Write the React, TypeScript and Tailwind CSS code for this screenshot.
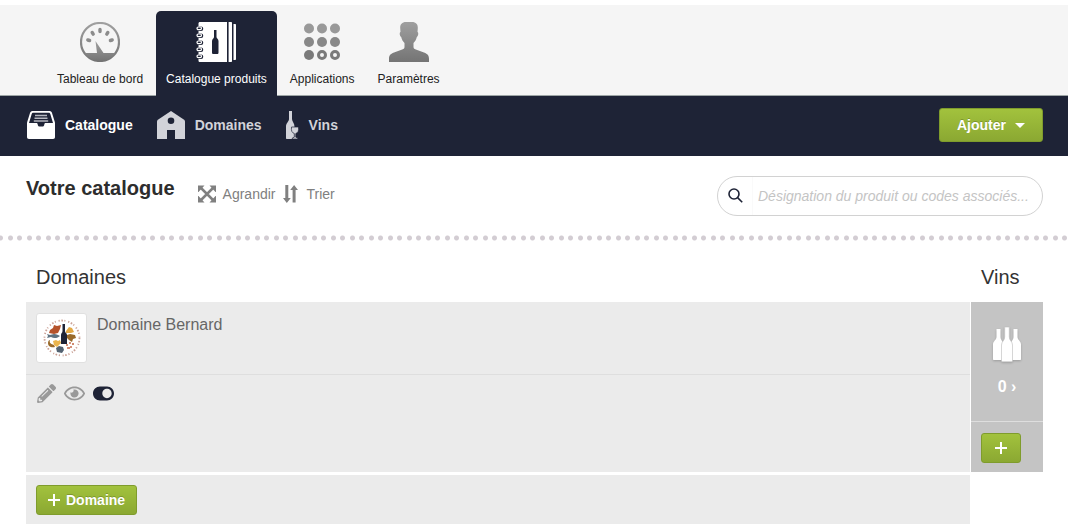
import { useState } from "react";
import type { ReactNode } from "react";
import { FaPencilAlt, FaRegEye, FaToggleOff, FaToggleOn } from "react-icons/fa";

interface Tab {
  label: string;
  icon: ReactNode;
  active?: boolean;
}

function GaugeIcon() {
  return (
    <svg width="40" height="40" viewBox="0 0 40 40">
      <defs>
        <linearGradient id="gauge-fill" x1="0" y1="0" x2="0" y2="1">
          <stop offset="0" stopColor="#a0a0a0" />
          <stop offset="1" stopColor="#747474" />
        </linearGradient>
      </defs>
      <circle
        cx="20"
        cy="20"
        r="19"
        fill="none"
        stroke="url(#gauge-fill)"
        strokeWidth="2.2"
      />
      <path
        d="M4.500 31H17L15.500 19L23.500 31H35.500A19 19 0 0 1 4.500 31Z"
        fill="url(#gauge-fill)"
      />
      <g stroke="#8c8c8c" strokeWidth="3.4" strokeLinecap="round">
        <path d="M20 7.500v2M12.200 10.500l1 1.600M27.800 10.500l-1 1.600M7.800 18l1.800.5M32.200 18l-1.800.5" />
      </g>
    </svg>
  );
}

const ringRows = [6, 13, 20, 27, 34];

function NotebookIcon() {
  return (
    <svg width="40" height="40" viewBox="0 0 40 40">
      <path d="M4 0h27v40H4c-1 0-1.500-.5-1.500-1.500v-37C2.500.5 3 0 4 0z" fill="#fff" />
      <path d="M32.600 0h2.400c.6 0 1 .4 1 1v38c0 .6-.4 1-1 1h-2.400zM37.500 2h1.500c.6 0 1 .4 1 1v34c0 .6-.4 1-1 1h-1.500z" fill="#fff" />
      <g fill="#1e2336">
        {ringRows.map((y) => (
          <path key={y} d={`M0 ${y - 1.5}h5a2 2 0 0 1 0 4.500H0z`} />
        ))}
        <path d="M18 8h2.500v7c0 1.500 2 2 2 4v11.500c0 1-.5 1.500-1.500 1.500h-3.500c-1 0-1.500-.5-1.500-1.500V19c0-2 2-2.500 2-4z" />
      </g>
      <g fill="none" stroke="#fff" strokeWidth="1.200">
        {ringRows.map((y) => (
          <rect key={y} x="1" y={y - 1} width="4.500" height="2.600" rx="1.300" />
        ))}
      </g>
    </svg>
  );
}

function DotsIcon() {
  return (
    <svg width="40" height="40" viewBox="0 0 40 40">
      <g fill="#999">
        <circle cx="7" cy="6.500" r="5" />
        <circle cx="20" cy="6.500" r="5" />
        <circle cx="33" cy="6.500" r="5" />
      </g>
      <g fill="#888">
        <circle cx="7" cy="20" r="5" />
        <circle cx="20" cy="20" r="5" />
        <circle cx="33" cy="20" r="5" />
      </g>
      <circle cx="7" cy="33" r="5" fill="#7a7a7a" />
      <g fill="none" stroke="#7a7a7a" strokeWidth="3">
        <circle cx="20" cy="33" r="3.500" />
        <circle cx="33" cy="33" r="3.500" />
      </g>
    </svg>
  );
}

function UserIcon() {
  return (
    <svg width="40" height="40" viewBox="0 0 40 40">
      <defs>
        <linearGradient id="user-fill" x1="0" y1="0" x2="0" y2="1">
          <stop offset="0" stopColor="#9f9f9f" />
          <stop offset="1" stopColor="#747474" />
        </linearGradient>
      </defs>
      <path
        d="M17 0h6c4 0 6 2.500 5.800 6l-.3 4c1.200.3 1 4-.7 5-.5 2.500-1.800 4.500-3.300 6v4c0 1.500 1 2 3 2.700l7.500 2.800c3.800 1.500 5 3 5 6.500v3H0v-3c0-3.500 1.200-5 5-6.500l7.500-2.800c2-.7 3-1.200 3-2.700v-4c-1.500-1.500-2.800-3.500-3.300-6-1.700-1-1.900-4.700-.7-5l-.3-4C11 2.500 13 0 17 0z"
        fill="url(#user-fill)"
      />
    </svg>
  );
}

function InboxIcon() {
  return (
    <svg width="28" height="28" viewBox="0 0 28 28">
      <path
        d="M6 0h16c1.500 0 2.500.6 3 2l3 9.500V26c0 1.300-.7 2-2 2H2c-1.300 0-2-.7-2-2V11.500L3 2c.5-1.400 1.500-2 3-2z"
        fill="#fff"
      />
      <path
        d="M6.500 1.800h15c1 0 1.500.4 1.800 1.200l2.700 9h-7.500c-.8 0-1 .5-1.200 1.500-.3 1.500-.8 2-1.800 2h-3c-1 0-1.500-.5-1.800-2-.2-1-.4-1.500-1.200-1.500H2L4.700 3c.3-.8.8-1.200 1.800-1.200z"
        fill="#1e2336"
      />
      <path d="M8 4.500h12M7.500 7.200h13M6.800 10h14.400" stroke="#b5b7bf" strokeWidth="1.500" />
    </svg>
  );
}

function BarnIcon() {
  return (
    <svg width="28" height="28" viewBox="0 0 28 28">
      <path
        fillRule="evenodd"
        d="M14 0l13.500 9 .5 1.500V28H18V19h-8v9H0V10.500L.5 9zM14 6.500a3.300 3.300 0 1 0 0 6.600 3.300 3.300 0 0 0 0-6.600z"
        fill="#d2d3d9"
      />
    </svg>
  );
}

function BottleGlassIcon() {
  return (
    <svg width="13" height="28" viewBox="0 0 13 28">
      <path
        d="M3 0h3v8c0 2.500 2.500 4 2.500 7.500V28H1c-.7 0-1-.3-1-1V15.500C0 12 3 10.500 3 8z"
        fill="#d2d3d9"
      />
      <path
        d="M5.500 16h7c.5 3.800-.5 5.800-2.700 6.500v3.700l2 .8v1H6.300v-1l2-.8v-3.700C6 21.800 5 19.800 5.500 16z"
        fill="#d2d3d9"
        stroke="#1e2336"
        strokeWidth=".7"
      />
    </svg>
  );
}

function ExpandIcon() {
  return (
    <svg width="18" height="18" viewBox="0 0 18 18">
      <path d="M3 3l12 12M15 3L3 15" stroke="#808080" strokeWidth="2.500" />
      <path
        d="M0 .5h6.500l-6 6.500H0zM18 .5h-6.500L17.500 7h.5zM0 17.500h6.500L.5 11H0zM18 17.500h-6.500l6-6.500h.5z"
        fill="#808080"
      />
    </svg>
  );
}

function SortIcon() {
  return (
    <svg width="15" height="18" viewBox="0 0 15 18">
      <path
        d="M2.300 0h3v13h2.500L3.800 18 0 13h2.300zM9.600 17.500h3V5H15l-3.900-5L7.200 5h2.400z"
        fill="#808080"
      />
    </svg>
  );
}

function SearchIcon() {
  return (
    <svg width="15" height="15" viewBox="0 0 15 15" fill="none" stroke="#1e2336" strokeWidth="1.600">
      <circle cx="6" cy="6" r="5" />
      <path d="M9.600 9.600l4.600 4.600" />
    </svg>
  );
}

function BottlesIcon() {
  return (
    <svg
      width="28"
      height="35"
      viewBox="0 0 28 35"
      className="drop-shadow-[0_1px_1px_rgba(0,0,0,0.2)]"
    >
      <g fill="#fff">
        <path d="M3.500 2h4v8c0 3 2.500 4 2.500 7.500V33H1c-.7 0-1-.3-1-1V17.500C0 14 3.500 13 3.500 10z" />
        <path d="M20.500 2h4v8c0 3 3.500 4 3.500 7.500V32c0 .7-.3 1-1 1h-9V17.500c0-3.500 2.500-4.500 2.500-7.500z" />
        <path
          d="M11.700 0h4.600v10c0 3.500 3.200 4.500 3.200 8v15.500c0 .9-.4 1.300-1.300 1.300H9.800c-.9 0-1.300-.4-1.300-1.300V18c0-3.500 3.200-4.500 3.200-8z"
          stroke="#c4c4c4"
          strokeWidth=".7"
        />
      </g>
    </svg>
  );
}

function EstateLogo() {
  return (
    <svg width="48" height="48" viewBox="0 0 48 48" role="img" aria-label="Domaine Bernard">
      <circle
        cx="24"
        cy="24"
        r="17.500"
        fill="none"
        stroke="#cba297"
        strokeWidth="1.800"
        strokeDasharray="1.200 1.700 1.600 1.500 1 2.800"
      />
      <path d="M12 16l3-2 1-3 3 1 4-1-1 4-2 4-4 1-5-1z" fill="#b5532b" />
      <path d="M28 17l3-4 3 1 2 4-3 1h-5z" fill="#e3a844" />
      <path d="M9 20l3 1 4-1c3 0 4 1 6 2-2 2-6 3-9 1l-4 1 1-2z" fill="#5f7280" />
      <path d="M29 21l3-1 5 1 1 3-3 1-1 3-3-2-2-2z" fill="#9a6a2a" />
      <path d="M12 26c-1 3 1 4 4 5l1 2c-3 1-7 0-7-4 0-2 1-3 2-3z" fill="#9a6a2a" />
      <path d="M15 27l3-1 2 1 2-1 1 3-4 4-3-2z" fill="#eab54e" />
      <path d="M18 34l3-2 4 1 1 3-2 3-5-1z" fill="#536271" />
      <path
        d="M28 31h2m1-2h2m-1 4h2m1-4v2m-4 2v2m-2-1h1"
        stroke="#c66e4f"
        strokeWidth="1.600"
      />
      <path d="M24.500 10h2.500v7c0 2 2 2 2 4v9h-6v-9c0-2 1.500-2 1.500-4z" fill="#1e2336" />
    </svg>
  );
}

function PlusIcon() {
  return (
    <svg width="12" height="12" viewBox="0 0 12 12" aria-hidden="true">
      <path d="M6 0v12M0 6h12" stroke="#fff" strokeWidth="2" />
    </svg>
  );
}

const tabs: Tab[] = [
  { label: "Tableau de bord", icon: <GaugeIcon /> },
  { label: "Catalogue produits", icon: <NotebookIcon />, active: true },
  { label: "Applications", icon: <DotsIcon /> },
  { label: "Paramètres", icon: <UserIcon /> },
];

const sections: Tab[] = [
  { label: "Catalogue", icon: <InboxIcon />, active: true },
  { label: "Domaines", icon: <BarnIcon /> },
  { label: "Vins", icon: <BottleGlassIcon /> },
];

const greenButton =
  "flex items-center justify-center rounded-[3px] border border-[#7f9c2c] bg-linear-to-b from-[#a2c23d] to-[#8ba832] font-bold text-white [text-shadow:0_-1px_0_rgba(0,0,0,0.2)]";

function Header() {
  return (
    <header>
      <nav className="flex h-[91px] gap-[3px] border-b border-[#9da5a5] bg-[#f5f5f5] pl-[47px] pt-[6px]">
        {tabs.map((tab) => (
          <a
            key={tab.label}
            href="#"
            className={
              tab.active
                ? "-mb-px flex flex-col items-center rounded-t-[5px] bg-[#1e2336] px-[10px] pt-[11px] text-white"
                : "flex flex-col items-center px-[10px] pt-[11px] text-[#222]"
            }
          >
            {tab.icon}
            <span className="mt-[9px] text-xs">{tab.label}</span>
          </a>
        ))}
      </nav>
      <div className="flex h-[60px] items-center justify-between bg-[#1e2336] pb-[2px] pl-[27px] pr-[25px]">
        <nav className="flex items-center gap-6">
          {sections.map((section) => (
            <a
              key={section.label}
              href="#"
              className={
                section.active
                  ? "flex items-center gap-[10px] text-sm font-bold text-white"
                  : "flex items-center gap-[10px] text-sm font-bold text-[#d2d3d9]"
              }
            >
              {section.icon}
              {section.label}
            </a>
          ))}
        </nav>
        <button type="button" className={`${greenButton} h-[34px] gap-[9px] px-[17px] text-sm`}>
          Ajouter
          <svg width="10" height="5" viewBox="0 0 10 5" aria-hidden="true">
            <path d="M0 0h10L5 5z" fill="#fff" />
          </svg>
        </button>
      </div>
    </header>
  );
}

function Toolbar() {
  return (
    <div className="flex items-start justify-between pb-[19px] pl-[26px] pr-[25px] pt-5">
      <div className="flex items-center">
        <h1 className="mb-3 text-xl leading-6 font-bold text-[#2d2d2d]">Votre catalogue</h1>
        <div className="ml-[23px] flex gap-2 text-sm text-[#808080]">
          <button type="button" className="flex items-center gap-[7px]">
            <ExpandIcon />
            Agrandir
          </button>
          <button type="button" className="flex items-center gap-2">
            <SortIcon />
            Trier
          </button>
        </div>
      </div>
      <label className="flex h-10 w-[326px] items-center rounded-full border border-[#d2d2d2]">
        <span className="flex h-full w-[35px] items-center justify-end border-r border-[#fafafa] pb-[2px] pr-[9px]">
          <SearchIcon />
        </span>
        <input
          type="text"
          aria-label="Rechercher un produit"
          placeholder="Désignation du produit ou codes associés..."
          className="min-w-0 flex-1 bg-transparent pl-[5px] text-sm italic outline-none placeholder:text-[#c4c4c4]"
        />
      </label>
    </div>
  );
}

function Catalogue() {
  const [online, setOnline] = useState(true);

  return (
    <div className="pl-[26px] pr-[25px] pt-[22px]">
      <table className="w-full border-separate border-spacing-0">
        <thead>
          <tr className="text-left text-xl text-[#333]">
            <th className="pb-[11px] pl-[10px] font-normal">Domaines</th>
            <th className="w-[73px] pb-[11px] pl-[11px] font-normal">Vins</th>
          </tr>
        </thead>
        <tbody>
          <tr>
            <td className="bg-[#ebebeb] p-0 align-top">
              <div className="flex h-[73px] gap-[10px] border-b border-[#dedede] pl-[10px] pt-[11px]">
                <div className="flex h-[50px] w-[51px] items-center justify-center rounded-[3px] border border-[#e0e0e0] bg-white">
                  <EstateLogo />
                </div>
                <a href="#" className="self-start text-base leading-6 text-[#666]">
                  Domaine Bernard
                </a>
              </div>
              <div className="flex items-center gap-2 pl-[11px] pt-2 text-[#999]">
                <button type="button" aria-label="Modifier">
                  <FaPencilAlt size={19} />
                </button>
                <button type="button" aria-label="Voir">
                  <FaRegEye size={21} />
                </button>
                <label className="cursor-pointer text-[#1e2336]">
                  <input
                    type="checkbox"
                    aria-label="En ligne"
                    checked={online}
                    onChange={(e) => setOnline(e.target.checked)}
                    className="sr-only"
                  />
                  {online ? <FaToggleOn size={21} /> : <FaToggleOff size={21} />}
                </label>
              </div>
            </td>
            <td className="border-l border-white bg-[#c4c4c4] p-0 align-top">
              <a
                href="#"
                className="flex h-[120px] flex-col items-center border-b border-[#dedede] pt-[25px] font-bold text-white"
              >
                <BottlesIcon />
                <span className="mt-[13px] text-base">0 ›</span>
              </a>
              <div className="h-[50px] pl-[10px] pt-[11px]">
                <button type="button" aria-label="Ajouter un vin" className={`${greenButton} h-[30px] w-10`}>
                  <PlusIcon />
                </button>
              </div>
            </td>
          </tr>
          <tr>
            <td className="border-t-[3px] border-white bg-[#ebebeb] pb-[9px] pl-[10px] pt-[10px]">
              <button type="button" className={`${greenButton} h-[30px] gap-[6px] px-[11px] text-sm`}>
                <PlusIcon />
                Domaine
              </button>
            </td>
            <td />
          </tr>
        </tbody>
      </table>
    </div>
  );
}

export default function App() {
  return (
    <div className="bg-white pr-4 pt-[5px] font-['Liberation_Sans',Arial,sans-serif]">
      <Header />
      <main>
        <Toolbar />
        {/* Dotted separator: two rows of dots interleaved on a 19px tile */}
        <div className="h-[6px] bg-[radial-gradient(circle,#d3cdd3_2px,transparent_3px),radial-gradient(circle,#d3cdd3_2px,transparent_3px)] bg-size-[19px_6px] bg-position-[1px_0,10px_0]" />
        <Catalogue />
      </main>
    </div>
  );
}
